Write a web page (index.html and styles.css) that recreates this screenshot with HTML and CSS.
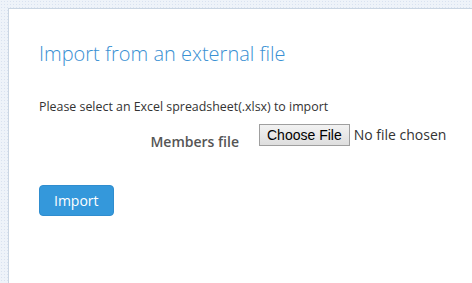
FILE: index.html
```html
<!DOCTYPE html>
<html lang="en">
<head>
    <meta charset="UTF-8">
    <meta name="viewport" content="width=device-width, initial-scale=1.0">
    <title>Import Members</title>
    <link rel="stylesheet" href="styles.css">
</head>
<body>
    <div class="panel">
        <h2 class="panel-title">Import from an external file</h2>

        <form id="import-form">
            <p class="hint">Please select an Excel spreadsheet(.xlsx) to import</p>

            <div class="form-row">
                <label for="members-file">Members file</label>
                <input type="file" id="members-file" name="members-file" accept=".xlsx">
            </div>

            <button type="submit" class="btn-import">Import</button>
        </form>
    </div>
</body>
</html>
```

FILE: styles.css
```css
html, body {
    height: 100%;
}

body {
    margin: 0;
    padding: 8px 0 0 8px;
    box-sizing: border-box;
    overflow: hidden;
    background-color: #eef3f9;
    background-image: radial-gradient(#d9e2f0 1px, transparent 1px);
    background-size: 3px 3px;
    font-family: "Open Sans", "Liberation Sans", sans-serif;
    color: #333;
}

.panel {
    height: 100%;
    background-color: #fff;
    border-top: 1px solid #c9d5e2;
    border-left: 1px solid #c9d5e2;
    padding: 31px 0 0 30px;
    box-sizing: border-box;
}

.panel-title {
    margin: 0 0 30px;
    font-size: 20px;
    font-weight: 300;
    line-height: 28px;
    color: #3990d3;
}

.hint {
    margin: 0 0 9px;
    font-size: 12.4px;
    line-height: 17px;
}

.form-row {
    display: flex;
    align-items: flex-start;
    gap: 20px;
}

.form-row label {
    flex: 0 0 200px;
    text-align: right;
    font-size: 14px;
    font-weight: 600;
    color: #555;
    padding-top: 8px;
}

.form-row input[type="file"] {
    flex: 1;
    min-width: 0;
    font-family: "Open Sans", "Liberation Sans", sans-serif;
    font-size: 14px;
    color: #333;
}

.form-row input[type="file"]::file-selector-button {
    font-family: "Liberation Sans", Arial, sans-serif;
    font-size: 14px;
    color: #000;
    padding: 2px 7px;
    margin-right: 4px;
    background: linear-gradient(#f2f2f2, #dedede);
    border: 1px solid #9f9f9f;
    border-radius: 0;
}

.btn-import {
    margin-top: 34px;
    background-color: #3498db;
    color: #fff;
    font-family: "Open Sans", "Liberation Sans", sans-serif;
    font-size: 14px;
    padding: 5px 14px;
    border: 1px solid #2f8dcf;
    border-radius: 4px;
    cursor: pointer;
}
```
